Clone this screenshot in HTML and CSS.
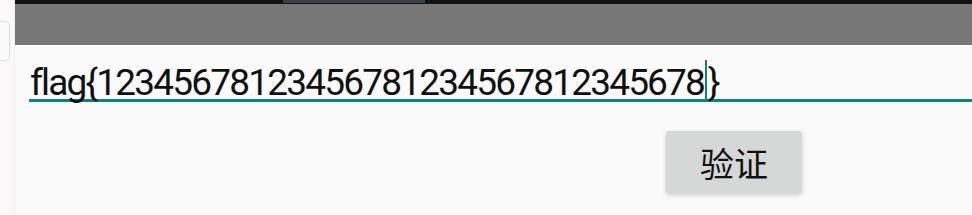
FILE: index.html
```html
<!DOCTYPE html>
<html lang="en">
<head>
  <meta charset="UTF-8">
  <title>Flag Check</title>
  <link rel="stylesheet" href="styles.css">
</head>
<body>

  <div class="side">
    <div class="side-tab"></div>
  </div>

  <div class="screen">
    <div class="status-bar">
      <div class="status-seg"></div>
    </div>
    <div class="action-bar"></div>

    <div class="content">
      <div class="field">
        <span class="field-text">flag{12345678123456781234567812345678<span class="cursor"></span>}</span>
      </div>
      <div class="actions">
        <button class="btn">验证</button>
      </div>
    </div>
  </div>

</body>
</html>
```

FILE: styles.css
```css
body {
  margin: 0;
  width: 972px;
  height: 215px;
  overflow: hidden;
  display: flex;
  background-color: #fafafa;
  font-family: Roboto, "Noto Sans CJK SC", sans-serif;
}

.side {
  width: 14px;
  background-color: #fbf8f9;
  border-right: 1px solid #f2eff0;
  padding-top: 21px;
}

.side-tab {
  width: 9px;
  height: 38px;
  background: #fafafa;
  border: 1px solid #dcdcdc;
  border-left: none;
  border-radius: 0 5px 5px 0;
}

.screen {
  flex: 1;
  display: flex;
  flex-direction: column;
}

.status-bar {
  height: 4px;
  background-color: #121212;
  padding-left: 268px;
}

.status-seg {
  width: 142px;
  height: 3px;
  background-color: #3b404b;
}

.action-bar {
  height: 41px;
  background-color: #777777;
}

.content {
  flex: 1;
  padding: 0 0 0 14px;
}

.field {
  margin-top: 17px;
  height: 37px;
  border-bottom: 3px solid #0f8577;
  display: flex;
  align-items: flex-end;
}

.field-text {
  font-size: 37px;
  line-height: 34px;
  color: #111;
  letter-spacing: -1.8px;
  position: relative;
  top: 3px;
  margin-left: 1px;
}

.cursor {
  display: inline-block;
  width: 2px;
  height: 42px;
  background-color: #0f8577;
  vertical-align: -7px;
  margin: 0 1px 0 1px;
}

.actions {
  display: flex;
  justify-content: flex-end;
  padding-right: 170px;
  margin-top: 29px;
}

.btn {
  width: 136px;
  height: 62px;
  border: none;
  border-radius: 3px;
  background-color: #d6d7d7;
  box-shadow: 0 2px 5px rgba(0, 0, 0, 0.18);
  font-family: "Noto Sans CJK SC", sans-serif;
  font-size: 34px;
  color: #111;
  padding: 0;
}
```
